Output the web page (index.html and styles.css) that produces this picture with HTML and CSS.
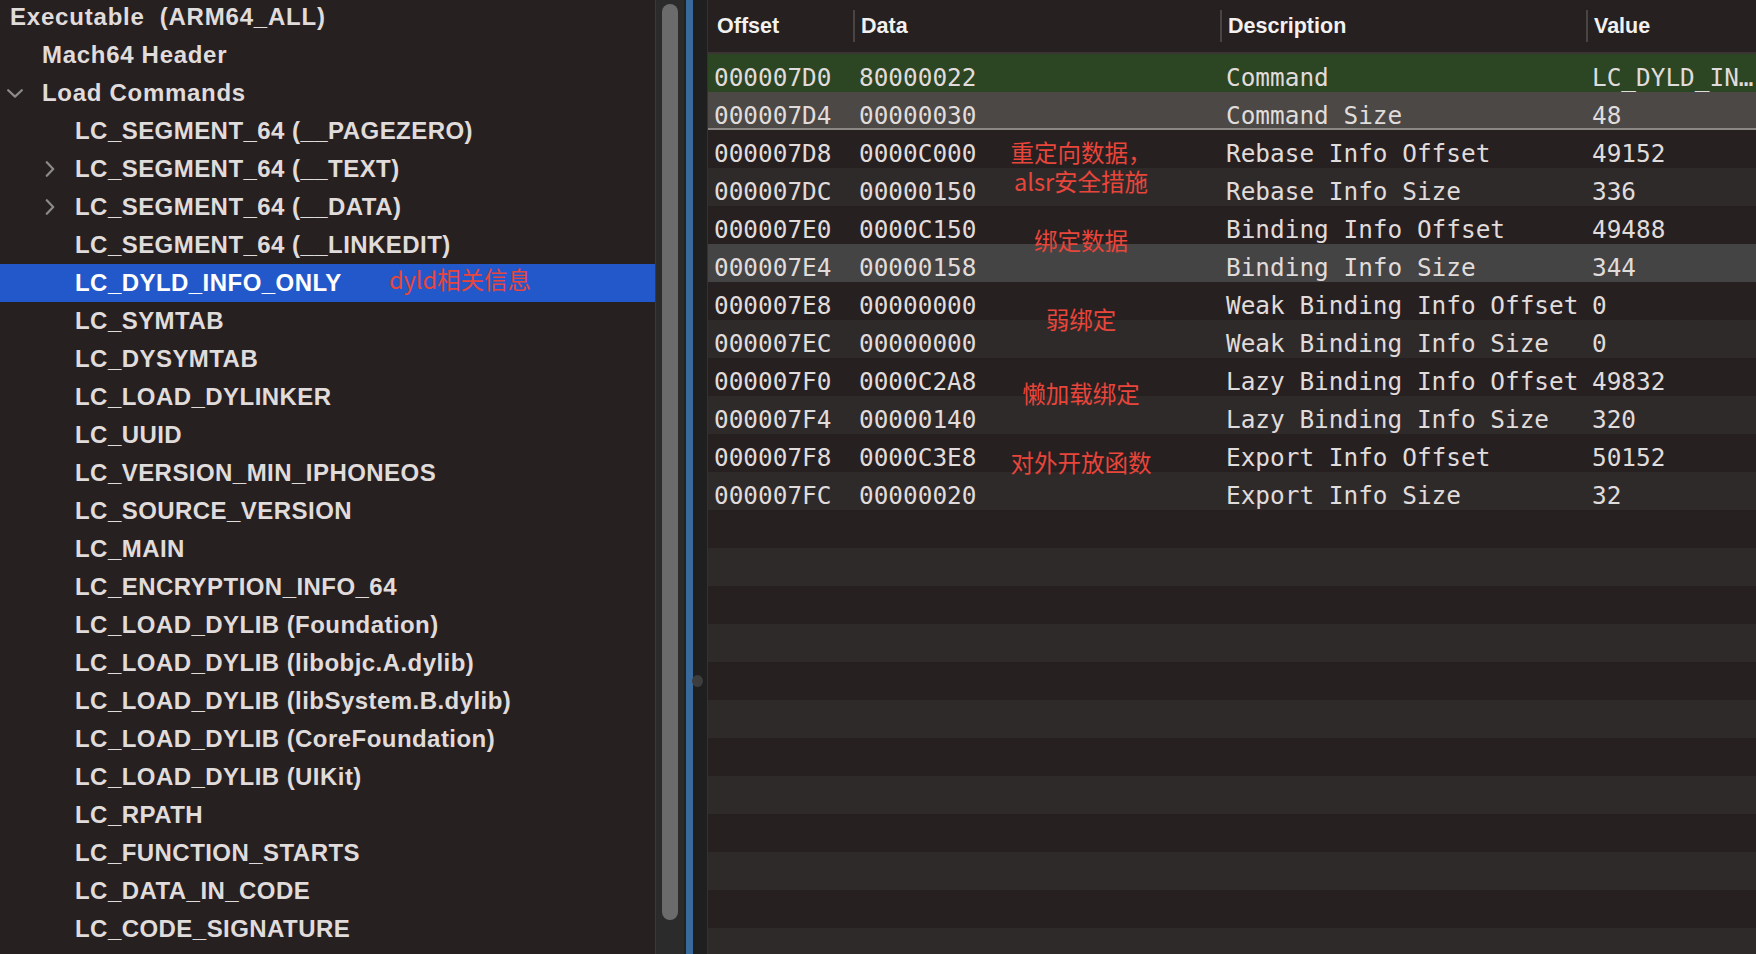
FILE: index.html
```html
<!DOCTYPE html>
<html lang="zh-CN">
<head>
<meta charset="utf-8">
<title>MachOView</title>
<link rel="stylesheet" href="styles.css">
</head>
<body>
<div class="app">
  <aside class="sidebar">
    <ul class="tree">
      <li class="row l0"><span class="label">Executable  (ARM64_ALL)</span></li>
      <li class="row l1"><span class="disc"></span><span class="label">Mach64 Header</span></li>
      <li class="row l1"><span class="disc"><svg width="16" height="9" viewBox="0 0 16 9"><path d="M1.2 1.2 L8 7.6 L14.8 1.2" /></svg></span><span class="label">Load Commands</span></li>
      <li class="row l2"><span class="disc"></span><span class="label">LC_SEGMENT_64 (__PAGEZERO)</span></li>
      <li class="row l2"><span class="disc"><svg class="right" width="10" height="16" viewBox="0 0 10 16"><path d="M1.8 1.2 L8.2 8 L1.8 14.8" /></svg></span><span class="label">LC_SEGMENT_64 (__TEXT)</span></li>
      <li class="row l2"><span class="disc"><svg class="right" width="10" height="16" viewBox="0 0 10 16"><path d="M1.8 1.2 L8.2 8 L1.8 14.8" /></svg></span><span class="label">LC_SEGMENT_64 (__DATA)</span></li>
      <li class="row l2"><span class="disc"></span><span class="label">LC_SEGMENT_64 (__LINKEDIT)</span></li>
      <li class="row l2 selected"><span class="disc"></span><span class="label">LC_DYLD_INFO_ONLY</span><span class="tree-note">dyld相关信息</span></li>
      <li class="row l2"><span class="disc"></span><span class="label">LC_SYMTAB</span></li>
      <li class="row l2"><span class="disc"></span><span class="label">LC_DYSYMTAB</span></li>
      <li class="row l2"><span class="disc"></span><span class="label">LC_LOAD_DYLINKER</span></li>
      <li class="row l2"><span class="disc"></span><span class="label">LC_UUID</span></li>
      <li class="row l2"><span class="disc"></span><span class="label">LC_VERSION_MIN_IPHONEOS</span></li>
      <li class="row l2"><span class="disc"></span><span class="label">LC_SOURCE_VERSION</span></li>
      <li class="row l2"><span class="disc"></span><span class="label">LC_MAIN</span></li>
      <li class="row l2"><span class="disc"></span><span class="label">LC_ENCRYPTION_INFO_64</span></li>
      <li class="row l2"><span class="disc"></span><span class="label">LC_LOAD_DYLIB (Foundation)</span></li>
      <li class="row l2"><span class="disc"></span><span class="label">LC_LOAD_DYLIB (libobjc.A.dylib)</span></li>
      <li class="row l2"><span class="disc"></span><span class="label">LC_LOAD_DYLIB (libSystem.B.dylib)</span></li>
      <li class="row l2"><span class="disc"></span><span class="label">LC_LOAD_DYLIB (CoreFoundation)</span></li>
      <li class="row l2"><span class="disc"></span><span class="label">LC_LOAD_DYLIB (UIKit)</span></li>
      <li class="row l2"><span class="disc"></span><span class="label">LC_RPATH</span></li>
      <li class="row l2"><span class="disc"></span><span class="label">LC_FUNCTION_STARTS</span></li>
      <li class="row l2"><span class="disc"></span><span class="label">LC_DATA_IN_CODE</span></li>
      <li class="row l2"><span class="disc"></span><span class="label">LC_CODE_SIGNATURE</span></li>
    </ul>
  </aside>

  <div class="vscroll"><div class="thumb"></div></div>

  <div class="splitter">
    <span class="split-blue"></span>
    <span class="split-dark"></span>
    <span class="grip"></span>
  </div>

  <main class="table">
    <div class="thead">
      <div class="th first"><span class="th-text">Offset</span></div>
      <div class="th"><span class="sep"></span><span class="th-text">Data</span></div>
      <div class="th"><span class="sep"></span><span class="th-text">Description</span></div>
      <div class="th"><span class="sep"></span><span class="th-text">Value</span></div>
    </div>
    <div class="tbody">
      <div class="tr green"><span class="td">000007D0</span><span class="td">80000022</span><span class="td">Command</span><span class="td">LC_DYLD_IN…</span></div>
      <div class="tr gray-line"><span class="td">000007D4</span><span class="td">00000030</span><span class="td">Command Size</span><span class="td">48</span></div>
      <div class="tr"><span class="td">000007D8</span><span class="td">0000C000</span><span class="td">Rebase Info Offset</span><span class="td">49152</span></div>
      <div class="tr"><span class="td">000007DC</span><span class="td">00000150</span><span class="td">Rebase Info Size</span><span class="td">336</span></div>
      <div class="tr"><span class="td">000007E0</span><span class="td">0000C150</span><span class="td">Binding Info Offset</span><span class="td">49488</span></div>
      <div class="tr gray"><span class="td">000007E4</span><span class="td">00000158</span><span class="td">Binding Info Size</span><span class="td">344</span></div>
      <div class="tr"><span class="td">000007E8</span><span class="td">00000000</span><span class="td">Weak Binding Info Offset</span><span class="td">0</span></div>
      <div class="tr"><span class="td">000007EC</span><span class="td">00000000</span><span class="td">Weak Binding Info Size</span><span class="td">0</span></div>
      <div class="tr"><span class="td">000007F0</span><span class="td">0000C2A8</span><span class="td">Lazy Binding Info Offset</span><span class="td">49832</span></div>
      <div class="tr"><span class="td">000007F4</span><span class="td">00000140</span><span class="td">Lazy Binding Info Size</span><span class="td">320</span></div>
      <div class="tr"><span class="td">000007F8</span><span class="td">0000C3E8</span><span class="td">Export Info Offset</span><span class="td">50152</span></div>
      <div class="tr"><span class="td">000007FC</span><span class="td">00000020</span><span class="td">Export Info Size</span><span class="td">32</span></div>
      <div class="tr"></div>
      <div class="tr"></div>
      <div class="tr"></div>
      <div class="tr"></div>
      <div class="tr"></div>
      <div class="tr"></div>
      <div class="tr"></div>
      <div class="tr"></div>
      <div class="tr"></div>
      <div class="tr"></div>
      <div class="tr"></div>
      <div class="tr"></div>
    </div>

    <div class="note note-rebase">重定向数据，<br>alsr安全措施</div>
    <div class="note note-bind">绑定数据</div>
    <div class="note note-weak">弱绑定</div>
    <div class="note note-lazy">懒加载绑定</div>
    <div class="note note-export">对外开放函数</div>
  </main>
</div>
</body>
</html>
```

FILE: styles.css
```css
* {
  box-sizing: border-box;
}

html, body {
  margin: 0;
  padding: 0;
  background: #272021;
}

body {
  width: 1756px;
  height: 954px;
  overflow: hidden;
}

.app {
  display: flex;
  width: 1756px;
  height: 954px;
  overflow: hidden;
}

/* ---------- Sidebar tree ---------- */
.sidebar {
  width: 655px;
  flex: none;
  background: #272021;
  overflow: hidden;
}

.tree {
  list-style: none;
  margin: -2px 0 0 0;
  padding: 0;
}

.row {
  position: relative;
  display: flex;
  align-items: center;
  height: 38px;
  font-family: "Liberation Sans", Arial, sans-serif;
  font-weight: 700;
  font-size: 24px;
  letter-spacing: 0.45px;
  line-height: 38px;
  color: #e0dcdb;
  white-space: pre;
}

.l0 { padding-left: 10px; letter-spacing: 0.8px; }
.l1 { padding-left: 4px; letter-spacing: 0.7px; }
.l2 { padding-left: 37px; }

.disc {
  width: 22px;
  height: 38px;
  margin-right: 16px;
  flex: none;
  display: flex;
  align-items: center;
  justify-content: center;
}

.disc svg.right {
  margin-left: 3px;
}

.disc svg path {
  fill: none;
  stroke: #8d8a8a;
  stroke-width: 2.2;
  stroke-linecap: round;
  stroke-linejoin: round;
}

.row.selected {
  background: #2358ca;
  color: #ffffff;
}

.tree-note {
  position: absolute;
  left: 389px;
  top: -4px;
  font-family: "Noto Sans CJK SC", "Noto Sans", sans-serif;
  font-weight: 400;
  font-size: 23.5px;
  letter-spacing: 0;
  line-height: 38px;
  color: #e8453b;
}

/* ---------- Scrollbar ---------- */
.vscroll {
  width: 31px;
  flex: none;
  background: #2c2b2b;
  border-left: 1px solid #3a3838;
  border-right: 2px solid #232222;
  padding: 4px 0 0 6px;
}

.thumb {
  width: 16px;
  height: 916px;
  border-radius: 8px;
  background: #6b6b6b;
}

/* ---------- Splitter ---------- */
.splitter {
  position: relative;
  display: flex;
  width: 22px;
  flex: none;
}

.split-blue {
  width: 7px;
  background: #386a9c;
}

.split-dark {
  width: 15px;
  background: #1f1f1f;
  border-right: 1px solid #343333;
}

.grip {
  position: absolute;
  left: 6px;
  top: 675px;
  width: 11px;
  height: 12px;
  border-radius: 50%;
  background: #3d3d3d;
}

/* ---------- Table ---------- */
.table {
  position: relative;
  flex: 1;
  min-width: 0;
  background: #272021;
  overflow: hidden;
}

.thead {
  display: grid;
  grid-template-columns: 145px 367px 366px 1fr;
  height: 54px;
  border-bottom: 2px solid #3a3434;
  background: #272021;
}

.th {
  display: flex;
  align-items: center;
  height: 52px;
  font-family: "Liberation Sans", Arial, sans-serif;
  font-weight: 700;
  font-size: 21.5px;
  color: #f3f1f0;
  white-space: nowrap;
}

.th.first {
  padding-left: 9px;
}

.sep {
  width: 2px;
  height: 32px;
  background: #4a4545;
  margin-right: 6px;
  flex: none;
}

.tbody {
  display: flex;
  flex-direction: column;
}

.tr {
  display: grid;
  grid-template-columns: 145px 367px 366px 1fr;
  height: 38px;
  flex: none;
  background: #272021;
}

.tr:nth-child(even) {
  background: #2f2a2a;
}

.tr.green {
  background: #2c4523;
}

.tr.gray-line {
  background: #4b4845;
  box-shadow: inset 0 -2px 0 #8a8785;
}

.tr.gray {
  background: #454444;
}

.td {
  padding: 9px 0 0 6px;
  line-height: 29px;
  font-family: "DejaVu Sans Mono", "Liberation Mono", monospace;
  font-size: 24.4px;
  color: #e0dcdb;
  white-space: pre;
  overflow: hidden;
}

/* ---------- Annotations (overlay) ---------- */
.note {
  position: absolute;
  left: 293px;
  width: 160px;
  text-align: center;
  font-family: "Noto Sans CJK SC", "Noto Sans", sans-serif;
  font-size: 23.5px;
  line-height: 29px;
  color: #e8453b;
  white-space: nowrap;
}

.note-rebase { top: 138px; }
.note-bind   { top: 226px; }
.note-weak   { top: 305px; }
.note-lazy   { top: 379px; }
.note-export { top: 448px; }
```
